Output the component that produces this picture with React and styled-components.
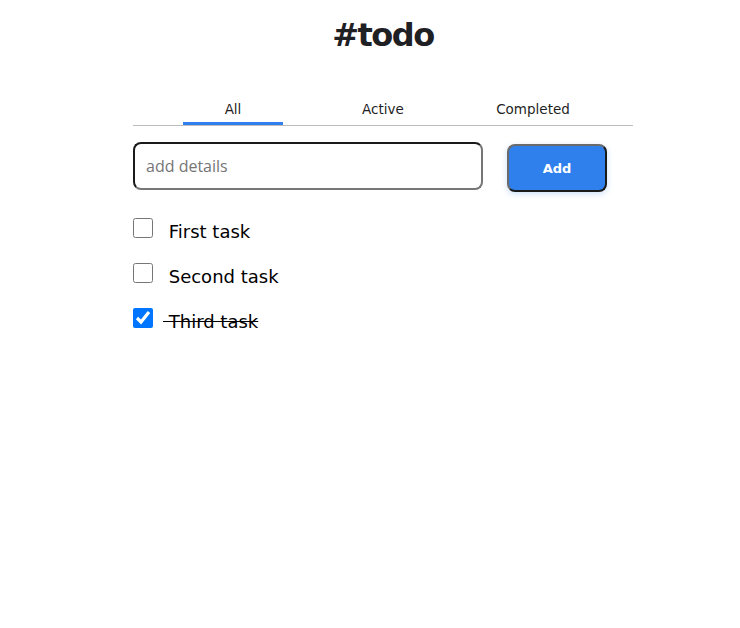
import React, { useState } from 'react'
import styled, { createGlobalStyle } from 'styled-components'

const Global = createGlobalStyle`
  body {
    margin: 0;
    background: #fff;
    font-family: "DejaVu Sans", "Noto Sans", sans-serif;
  }
`

const Page = styled.div`
  width: 500px;
  margin-left: 133px;
  padding-top: 14px;
`

const Title = styled.h1`
  margin: 0;
  text-align: center;
  font-size: 32px;
  font-weight: 700;
  letter-spacing: -1.5px;
  color: #1f2024;
  line-height: 42px;
`

const Tabs = styled.nav`
  display: flex;
  justify-content: center;
  gap: 50px;
  margin-top: 39px;
  border-bottom: 1px solid #bdbdbd;
`

const Tab = styled.button`
  width: 100px;
  height: 30px;
  padding: 0;
  border: none;
  background: none;
  font-family: inherit;
  font-size: 13.5px;
  color: #1f1f1f;
  border-bottom: 3px solid ${p => (p.$active ? '#2f80ed' : 'transparent')};
  border-radius: ${p => (p.$active ? '2px 2px 0 0' : '0')};
  cursor: pointer;
`

const Form = styled.form`
  display: flex;
  align-items: flex-start;
  gap: 24px;
  margin-top: 16px;
`

const Input = styled.input`
  box-sizing: border-box;
  width: 350px;
  height: 48px;
  padding: 0 11px;
  border: 2px solid;
  border-color: #1a1a1a #767676 #767676 #1a1a1a;
  border-radius: 8px;
  font-family: "Open Sans", sans-serif;
  font-size: 16px;
  outline: none;
  &::placeholder {
    color: #757575;
  }
`

const AddButton = styled.button`
  box-sizing: border-box;
  width: 100px;
  height: 48px;
  margin-top: 2px;
  border: 2px solid;
  border-color: #6b6b6b #1a1a1a #1a1a1a #6b6b6b;
  border-radius: 8px;
  background: #2f80ed;
  color: #fff;
  font-family: inherit;
  font-size: 13px;
  font-weight: 600;
  box-shadow: 0 2px 6px rgba(127, 177, 243, 0.4);
  cursor: pointer;
`

const List = styled.ul`
  list-style: none;
  margin: 26px 0 0;
  padding: 0;
  display: flex;
  flex-direction: column;
  gap: 25px;
`

const Item = styled.li`
  display: flex;
  align-items: center;
  height: 20px;
  font-size: 18px;
  color: #000;
`

const Check = styled.input`
  width: 20px;
  height: 20px;
  margin: 0 10px 0 0;
  accent-color: #0075ff;
`

const Label = styled.span`
  margin-top: 6px;
  text-decoration: ${p => (p.$done ? 'line-through' : 'none')};
`

export default function App() {
  const [tasks, setTasks] = useState([
    { id: 1, text: 'First task', done: false },
    { id: 2, text: 'Second task', done: false },
    { id: 3, text: 'Third task', done: true },
  ])
  const toggle = id =>
    setTasks(ts => ts.map(t => (t.id === id ? { ...t, done: !t.done } : t)))

  return (
    <>
      <Global />
      <Page>
        <Title>#todo</Title>
        <Tabs>
          <Tab $active>All</Tab>
          <Tab>Active</Tab>
          <Tab>Completed</Tab>
        </Tabs>
        <Form onSubmit={e => e.preventDefault()}>
          <Input placeholder="add details" />
          <AddButton type="submit">Add</AddButton>
        </Form>
        <List>
          {tasks.map(t => (
            <Item key={t.id}>
              <Check type="checkbox" checked={t.done} onChange={() => toggle(t.id)} />
              <Label $done={t.done}>{'\u00a0' + t.text}</Label>
            </Item>
          ))}
        </List>
      </Page>
    </>
  )
}
